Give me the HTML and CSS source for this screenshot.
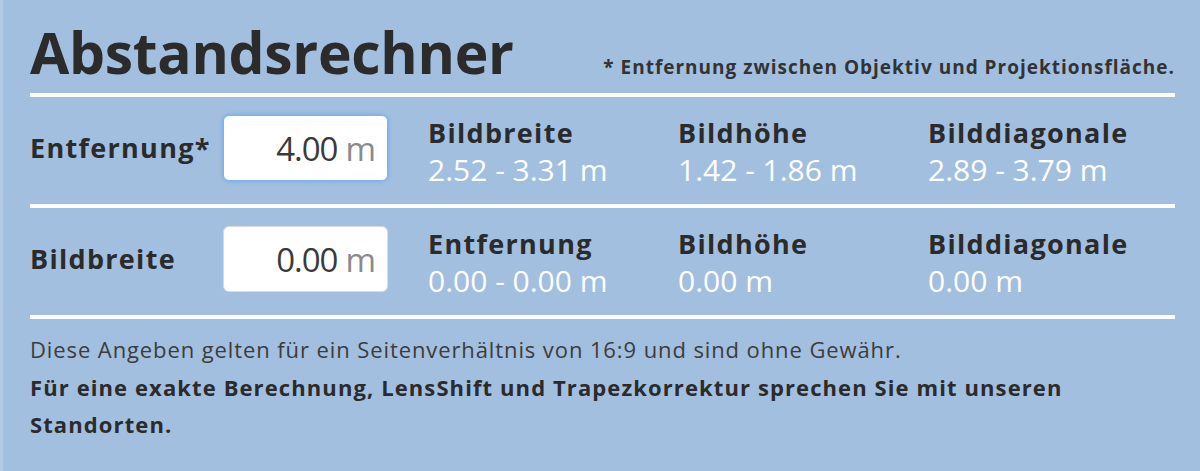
FILE: index.html
```html
<!DOCTYPE html>
<html lang="de">
<head>
    <meta charset="UTF-8">
    <meta name="viewport" content="width=device-width, initial-scale=1.0">
    <title>Abstandsrechner</title>
    <link rel="stylesheet" href="styles.css">
</head>
<body>
    <div class="calculator">
        <div class="calc-header">
            <h1>Abstandsrechner</h1>
            <span class="note">* Entfernung zwischen Objektiv und Projektionsfläche.</span>
        </div>

        <div class="calc-row">
            <label for="distance">Entfernung*</label>
            <div class="field focused">
                <input type="text" id="distance" value="4.00">
                <span class="unit">m</span>
            </div>
            <div class="result">
                <h3>Bildbreite</h3>
                <p>2.52 - 3.31 m</p>
            </div>
            <div class="result">
                <h3>Bildhöhe</h3>
                <p>1.42 - 1.86 m</p>
            </div>
            <div class="result">
                <h3>Bilddiagonale</h3>
                <p>2.89 - 3.79 m</p>
            </div>
        </div>

        <div class="calc-row">
            <label for="width">Bildbreite</label>
            <div class="field">
                <input type="text" id="width" value="0.00">
                <span class="unit">m</span>
            </div>
            <div class="result">
                <h3>Entfernung</h3>
                <p>0.00 - 0.00 m</p>
            </div>
            <div class="result">
                <h3>Bildhöhe</h3>
                <p>0.00 m</p>
            </div>
            <div class="result">
                <h3>Bilddiagonale</h3>
                <p>0.00 m</p>
            </div>
        </div>

        <div class="calc-footer">
            <p>Diese Angeben gelten für ein Seitenverhältnis von 16:9 und sind ohne Gewähr.</p>
            <p class="strong">Für eine exakte Berechnung, LensShift und Trapezkorrektur sprechen Sie mit unseren Standorten.</p>
        </div>
    </div>
</body>
</html>
```

FILE: styles.css
```css
body {
    font-family: 'Open Sans', 'DejaVu Sans', sans-serif;
    background-color: #a2bfdf;
    margin: 0;
    padding: 0;
}

.calculator {
    border-left: 3px solid #b3cbe6;
    padding: 17px 25px 0 27px;
    height: 471px;
    box-sizing: border-box;
    color: #2b2b2b;
}

.calc-header {
    display: flex;
    justify-content: space-between;
    align-items: baseline;
    border-bottom: 4px solid #fff;
    padding-bottom: 6px;
}

h1 {
    font-size: 57px;
    font-weight: 700;
    line-height: 70px;
    margin: 0;
    letter-spacing: -0.3px;
}

.note {
    font-size: 19px;
    font-weight: 700;
    letter-spacing: 1px;
    color: #333;
}

/* one calculation row: label, input, three results */
.calc-row {
    display: grid;
    grid-template-columns: 193px 205px 250px 250px 1fr;
    align-items: start;
    border-bottom: 4px solid #fff;
    padding: 18px 0 15px;
}

.calc-row label,
.result h3 {
    font-size: 27px;
    font-weight: 700;
    letter-spacing: 1.3px;
}

.calc-row label {
    line-height: 66px;
}

.field {
    display: flex;
    align-items: center;
    justify-content: flex-end;
    width: 165px;
    height: 66px;
    padding: 0 11px;
    background-color: #fff;
    border: 1px solid #d9d9d9;
    border-radius: 6px;
    box-sizing: border-box;
}

.field.focused {
    border-color: #7fb2ec;
    box-shadow: 0 0 4px #6aa6ea;
}

.field input {
    width: 90px;
    border: none;
    outline: none;
    padding: 0;
    text-align: right;
    font-family: inherit;
    font-size: 33px;
    letter-spacing: -1px;
    color: #3a3a3a;
    background: transparent;
    caret-color: #333;
}

.unit {
    font-size: 33px;
    color: #8a8a8a;
    margin-left: 8px;
}

.result h3 {
    line-height: 36px;
    margin: 0;
}

.result p {
    font-size: 30px;
    line-height: 38px;
    color: #fff;
    margin: 0;
}

.calc-footer {
    padding-top: 12px;
}

.calc-footer p {
    font-size: 22px;
    line-height: 37.5px;
    letter-spacing: 0.9px;
    color: #3c3c3c;
    margin: 0;
    max-width: 1080px;
}

.calc-footer .strong {
    font-weight: 700;
    letter-spacing: 1.1px;
    color: #2b2b2b;
}
```
